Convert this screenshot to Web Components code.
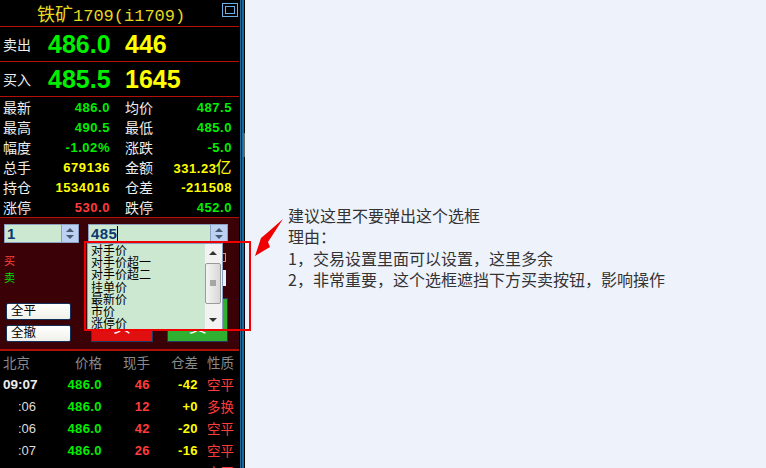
<!DOCTYPE html>
<html>
<head>
<meta charset="utf-8">
<style>
html, body { margin: 0; height: 100%; }
body {
  background: #eef2fb;
  font-family: "Liberation Sans", "Noto Sans CJK SC", sans-serif;
  overflow: hidden;
  display: flex;
}
</style>
</head>
<body>
<quote-panel></quote-panel>
<note-text>
  <div>建议这里不要弹出这个选框</div>
  <div>理由：</div>
  <div>1，交易设置里面可以设置，这里多余</div>
  <div>2，非常重要，这个选框遮挡下方买卖按钮，影响操作</div>
</note-text>
<script>
const FONT = '"Liberation Sans", "Noto Sans CJK SC", sans-serif';

class QuoteHeader extends HTMLElement {
  constructor() {
    super();
    this.attachShadow({ mode: 'open' }).innerHTML = `
<style>
:host { display: flex; align-items: center; height: 27px; padding-left: 37px; box-sizing: border-box; border-bottom: 1px solid #b01008; position: relative; }
span { font: 17px "Liberation Mono", "Noto Sans CJK SC", monospace; color: #e8d820; white-space: nowrap; }
b { font-weight: normal; font-size: 18px; }
svg { position: absolute; right: 1px; top: 3px; }
</style>
<span><b>铁矿</b>1709(i1709)</span>
<svg width="16" height="14"><rect x=".5" y=".5" width="15" height="13" fill="none" stroke="#6aaeea"/><rect x="3.5" y="3.5" width="9" height="7" fill="none" stroke="#6aaeea"/></svg>`;
  }
}

class BookRow extends HTMLElement {
  constructor() {
    super();
    const a = n => this.getAttribute(n);
    this.attachShadow({ mode: 'open' }).innerHTML = `
<style>
:host { display: flex; align-items: center; height: 35px; box-sizing: border-box; border-bottom: 1px solid #b01008; }
.l { width: 48px; padding-left: 3px; box-sizing: border-box; font-size: 14px; color: #eee; }
.p { width: 77px; font: bold 25px ${FONT}; color: #00ee00; }
.v { font: bold 25px ${FONT}; color: #ffff00; }
</style>
<span class="l">${a('label')}</span><span class="p">${a('price')}</span><span class="v">${a('vol')}</span>`;
  }
}

class StatGrid extends HTMLElement {
  constructor() {
    super();
    const rows = [
      ['最新', '486.0', 'g', '均价', '487.5', 'g'],
      ['最高', '490.5', 'g', '最低', '485.0', 'g'],
      ['幅度', '-1.02%', 'g', '涨跌', '-5.0', 'g'],
      ['总手', '679136', 'y', '金额', '331.23<b>亿</b>', 'y'],
      ['持仓', '1534016', 'y', '仓差', '-211508', 'y'],
      ['涨停', '530.0', 'r', '跌停', '452.0', 'g'],
    ];
    this.attachShadow({ mode: 'open' }).innerHTML = `
<style>
:host { display: grid; grid-template-columns: 30px 77px 15px 30px 77px; grid-auto-rows: 20px; padding-left: 3px; height: 121px; box-sizing: border-box; border-bottom: 1px solid #b01008; align-items: center; }
.l { font-size: 14px; color: #eee; }
.n { font: bold 13px ${FONT}; letter-spacing: .55px; text-align: right; white-space: nowrap; }
.g { color: #00ee00; } .y { color: #ffff00; } .r { color: #ff3b3b; }
b { font: 16px/16px "Noto Sans CJK SC", sans-serif; margin-left: -1px; }
</style>
${rows.map(r => `<span class="l">${r[0]}</span><span class="n ${r[2]}">${r[1]}</span><i></i><span class="l">${r[3]}</span><span class="n ${r[5]}">${r[4]}</span>`).join('')}`;
  }
}

class SpinBox extends HTMLElement {
  constructor() {
    super();
    this.attachShadow({ mode: 'open' }).innerHTML = `
<style>
:host { display: flex; height: 19px; box-sizing: border-box; border: 1px solid #8aa0c0; background: #cde8d0; }
.t { flex: 1; font: bold 15px ${FONT}; letter-spacing: .4px; color: #0a3a70; padding-left: 2px; line-height: 17px; display: flex; align-items: center; }
.t i { width: 1px; height: 15px; background: #000; }
.b { width: 16px; background: #bcd0f4; border-left: 1px solid #8aa0c0; }
svg { display: block; }
</style>
<span class="t">${this.getAttribute('value')}<i style="display:${this.hasAttribute('caret') ? 'block' : 'none'}"></i></span>
<span class="b"><svg width="16" height="17"><path d="M4 7l4-4 4 4zM4 10l4 4 4-4z" fill="#4a5a70"/></svg></span>`;
  }
}

class FlatButton extends HTMLElement {
  constructor() {
    super();
    this.attachShadow({ mode: 'open' }).innerHTML = `
<style>
:host { display: block; width: 65px; height: 17px; box-sizing: border-box; border: 1px solid #12305a; border-radius: 2px; background: linear-gradient(#fff, #f0f0ea); font-size: 12.500px; line-height: 15px; color: #000; padding-left: 4px; }
</style><slot></slot>`;
  }
}

class PickList extends HTMLElement {
  constructor() {
    super();
    const items = ['对手价', '对手价超一', '对手价超二', '挂单价', '最新价', '市价', '涨停价'];
    this.attachShadow({ mode: 'open' }).innerHTML = `
<style>
:host { display: flex; position: absolute; left: 87px; top: 243px; width: 136px; height: 86px; overflow: hidden; box-sizing: border-box; border: 1px solid #8aa0c0; border-bottom: 0; background: #cde8d0; }
.items { flex: 1; padding: 1px 0 0 3px; font-size: 12px; line-height: 12.200px; color: #000; }
.bar { width: 17px; background: #f2f2f2; position: relative; display: flex; flex-direction: column; align-items: center; }
.thumb { position: absolute; left: 0; top: 19px; width: 16px; height: 41px; box-sizing: border-box; border: 1px solid #9a9a9a; border-radius: 2px; background: linear-gradient(90deg, #f4f4f4, #d8d8d8); }
svg { position: absolute; left: 0; }
</style>
<div class="items">${items.map(i => `<div>${i}</div>`).join('')}</div>
<div class="bar">
  <svg style="top:5px" width="16" height="8"><path d="M4 6l4-4 4 4z" fill="#333"/></svg>
  <div class="thumb"></div>
  <svg style="top:36px" width="16" height="8"><path d="M5 1h6M5 3h6M5 5h6" stroke="#666"/></svg>
  <svg style="top:72px" width="16" height="8"><path d="M4 2l4 4 4-4z" fill="#333"/></svg>
</div>`;
  }
}

class OrderPanel extends HTMLElement {
  constructor() {
    super();
    this.attachShadow({ mode: 'open' }).innerHTML = `
<style>
:host { display: block; position: relative; height: 133px; background: #3a0206; border-bottom: 2px solid #b01008; box-sizing: border-box; }
.inputs { display: flex; gap: 9px; padding: 6px 0 0 4px; }
spin-box:first-child { width: 75px; }
spin-box:last-child { width: 140px; }
.side { padding: 10px 0 0 4px; font-size: 11px; line-height: 17px; }
.stack { position: absolute; left: 6px; top: 85px; display: flex; flex-direction: column; gap: 5px; }
.buy, .sell { position: absolute; top: 80px; height: 44px; border: 1px solid #223a60; box-sizing: border-box; text-align: center; color: #fff; font-size: 18px; line-height: 54px; overflow: hidden; }
.buy { left: 91px; width: 62px; background: #e01010; }
.sell { left: 167px; width: 61px; background: #30b030; }
.edge { position: absolute; left: 223px; top: 52px; width: 3px; height: 16px; background: #e8f0ff; }
.tick { position: absolute; left: 223px; top: 35px; width: 3px; height: 9px; box-sizing: border-box; border: 1px solid #c8a070; border-left: 0; }
</style>
<div class="inputs"><spin-box value="1"></spin-box><spin-box value="485" caret></spin-box></div>
<div class="side"><div style="color:#ff4040">买</div><div style="color:#00dd00">卖</div></div>
<div class="stack"><flat-button>全平</flat-button><flat-button>全撤</flat-button></div>
<div class="buy">买</div><div class="sell">卖</div><div class="edge"></div><div class="tick"></div>`;
  }
}

class TradeTable extends HTMLElement {
  constructor() {
    super();
    const rows = [
      ['09:07', '486.0', '46', '-42', '空平'],
      [':06', '486.0', '12', '+0', '多换'],
      [':06', '486.0', '42', '-20', '空平'],
      [':07', '486.0', '26', '-16', '空平'],
      ['', '', '', '', '空平'],
    ];
    this.attachShadow({ mode: 'open' }).innerHTML = `
<style>
:host { display: grid; grid-template-columns: 33px 66px 48px 48px 36px; grid-auto-rows: 22px; padding-left: 3px; align-items: center; height: 117px; overflow: hidden; box-sizing: border-box; }
.h { font-size: 13.500px; color: #8a8a8a; text-align: right; }
.h:first-of-type { text-align: left; }
.t { font: bold 13.500px ${FONT}; color: #eee; text-align: left; white-space: nowrap; }
.s { font: 13px ${FONT}; color: #ddd; text-align: right; }
.n { font: bold 13px ${FONT}; letter-spacing: .4px; text-align: right; }
.k { font-size: 13.500px; color: #ff3b3b; text-align: right; }
</style>
<span class="h">北京</span><span class="h">价格</span><span class="h">现手</span><span class="h">仓差</span><span class="h">性质</span>
${rows.map((r, i) => `<span class="${i ? 's' : 't'}">${r[0]}</span><span class="n" style="color:#00ee00">${r[1]}</span><span class="n" style="color:#ff3b3b">${r[2]}</span><span class="n" style="color:#ffff00">${r[3]}</span><span class="k">${r[4]}</span>`).join('')}`;
  }
}

class QuotePanel extends HTMLElement {
  constructor() {
    super();
    this.attachShadow({ mode: 'open' }).innerHTML = `
<style>
:host { display: flex; flex: none; width: 245px; height: 468px; background: #000; font-size: 14px; }
.main { width: 239px; }
.rail { width: 4px; height: 100%; margin-left: 1px; background: linear-gradient(90deg, #1c6a98 25%, #0a2a44 25% 50%, #1c6a98 50%); }
.thumb { position: absolute; left: 243px; top: 133px; width: 2px; height: 24px; background: #666; }
</style>
<div class="main">
<quote-header></quote-header>
<book-row label="卖出" price="486.0" vol="446"></book-row>
<book-row label="买入" price="485.5" vol="1645"></book-row>
<stat-grid></stat-grid>
<order-panel></order-panel>
<trade-table></trade-table>
</div>
<div class="rail"></div>
<div class="thumb"></div>
<pick-list></pick-list>
<call-out></call-out>`;
  }
}

class CallOut extends HTMLElement {
  constructor() {
    super();
    this.attachShadow({ mode: 'open' }).innerHTML = `
<style>
:host { position: absolute; left: 84px; top: 207px; width: 200px; height: 125px; display: block; pointer-events: none; }
.box { position: absolute; left: 0; top: 34px; width: 167px; height: 90px; box-sizing: border-box; border: 2px solid #f00000; }
svg { position: absolute; left: 0; top: 0; }
</style>
<div class="box"></div>
<svg width="200" height="60"><path d="M199 12l-16 14-6 5-6 18 15-9-2-5z" fill="#f00000"/></svg>`;
  }
}

class NoteText extends HTMLElement {
  constructor() {
    super();
    this.attachShadow({ mode: 'open' }).innerHTML = `
<style>
:host { display: block; padding: 205px 0 0 43px; font: 16px/21.300px "Noto Sans CJK SC", sans-serif; color: #333; white-space: nowrap; }
</style><slot></slot>`;
  }
}

customElements.define('quote-header', QuoteHeader);
customElements.define('book-row', BookRow);
customElements.define('stat-grid', StatGrid);
customElements.define('spin-box', SpinBox);
customElements.define('flat-button', FlatButton);
customElements.define('pick-list', PickList);
customElements.define('order-panel', OrderPanel);
customElements.define('trade-table', TradeTable);
customElements.define('call-out', CallOut);
customElements.define('quote-panel', QuotePanel);
customElements.define('note-text', NoteText);
</script>
</body>
</html>
